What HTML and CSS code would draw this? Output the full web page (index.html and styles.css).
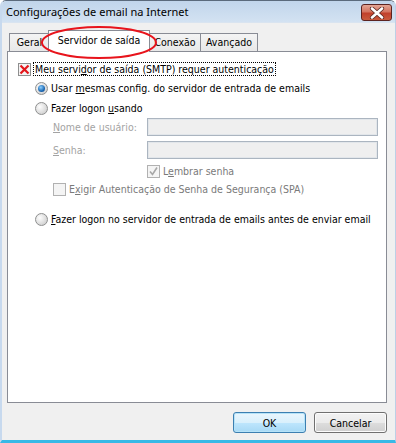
FILE: index.html
```html
<!DOCTYPE html>
<html lang="pt">
<head>
    <meta charset="UTF-8">
    <title>Configurações de email na Internet</title>
    <link rel="stylesheet" href="styles.css">
</head>
<body>
    <div class="window">
        <div class="titlebar">
            <span class="title">Configurações de email na Internet</span>
            <button class="close-btn" aria-label="Fechar">
                <svg width="16" height="12" viewBox="0 0 16 12">
                    <path d="M3 1.5 L13 10.5 M13 1.5 L3 10.5" stroke="#5b2a24" stroke-width="4.2" stroke-linecap="round"/>
                    <path d="M3 1.5 L13 10.5 M13 1.5 L3 10.5" stroke="#fff" stroke-width="2.6" stroke-linecap="round"/>
                </svg>
            </button>
        </div>
        <div class="client">
            <div class="tabs">
                <div class="tab tab-general">Geral</div>
                <div class="tab active">Servidor de saída</div>
                <div class="tab tab-conn">Conexão</div>
                <div class="tab tab-adv">Avançado</div>
            </div>
            <div class="panel">
                <div class="row row-auth">
                    <svg class="box" width="13" height="13" viewBox="0 0 13 13">
                        <rect x="0.5" y="0.5" width="12" height="12" fill="#f4f4f4" stroke="#8e8f8f"/>
                        <path d="M2.5 2.5 L10.5 10.5 M10.5 2.5 L2.5 10.5" stroke="#e3161b" stroke-width="2.2"/>
                    </svg>
                    <span class="focus">Meu servi<u>d</u>or de saída (SMTP) requer autenticação</span>
                </div>
                <div class="row row-same">
                    <span class="radio checked"></span>
                    <span>Usar <u>m</u>esmas config. do servidor de entrada de emails</span>
                </div>
                <div class="row row-logon">
                    <span class="radio"></span>
                    <span>Fazer logon <u>u</u>sando</span>
                </div>
                <div class="row row-user">
                    <span class="field-label disabled"><u>N</u>ome de usuário:</span>
                    <span class="field"></span>
                </div>
                <div class="row row-pass">
                    <span class="field-label disabled"><u>S</u>enha:</span>
                    <span class="field"></span>
                </div>
                <div class="row row-remember">
                    <svg class="box" width="13" height="13" viewBox="0 0 13 13">
                        <rect x="0.5" y="0.5" width="12" height="12" fill="#f4f4f4" stroke="#b1b1b1"/>
                        <path d="M3 6.5 L5.5 9.5 L10 2.5" fill="none" stroke="#a7a7a7" stroke-width="1.6"/>
                    </svg>
                    <span class="disabled-dark">L<u>e</u>mbrar senha</span>
                </div>
                <div class="row row-spa">
                    <svg class="box" width="13" height="13" viewBox="0 0 13 13">
                        <rect x="0.5" y="0.5" width="12" height="12" fill="#f4f4f4" stroke="#b1b1b1"/>
                    </svg>
                    <span class="disabled-dark">E<u>x</u>igir Autenticação de Senha de Segurança (SPA)</span>
                </div>
                <div class="row row-before">
                    <span class="radio"></span>
                    <span><u>F</u>azer logon no servidor de entrada de emails antes de enviar email</span>
                </div>
            </div>
            <div class="buttons">
                <button class="btn default">OK</button>
                <button class="btn">Cancelar</button>
            </div>
        </div>
        <svg class="mark" width="396" height="80" viewBox="0 0 396 80">
            <ellipse cx="99" cy="42.5" rx="57" ry="15.6" fill="none" stroke="#e8141c" stroke-width="2"/>
        </svg>
    </div>
</body>
</html>
```

FILE: styles.css
```css
* {
    box-sizing: border-box;
}
body {
    margin: 0;
    background: #fff;
    font-family: "DejaVu Sans Condensed", "DejaVu Sans", sans-serif;
    font-size: 10.5px;
    color: #000;
}
.window {
    position: relative;
    width: 396px;
    height: 443px;
    border-left: 2px solid #c7d9ee;
    border-right: 1px solid #bcd0e6;
    border-bottom: 3px solid #38b9e6;
    border-top: 1px solid #5b6a7c;
    border-radius: 6px 6px 0 0;
    background: #f0f0f0;
    display: flex;
    flex-direction: column;
    overflow: hidden;
    white-space: nowrap;
}
.titlebar {
    height: 22px;
    display: flex;
    align-items: center;
    justify-content: space-between;
    padding: 0 3px 0 4px;
    background: linear-gradient(#c1d5eb, #d3e2f2);
    border-bottom: 1px solid #d9e4f0;
}
.title {
    font-family: "Noto Sans", sans-serif;
    font-size: 11px;
    margin-top: -1px;
}
.close-btn {
    width: 31px;
    height: 17px;
    margin-top: 2px;
    padding: 0;
    border: 1px solid #5c2320;
    border-radius: 3px;
    background: linear-gradient(#e3a594, #d47460 45%, #c1402b 55%, #c95a3d);
    display: flex;
    align-items: center;
    justify-content: center;
}
.client {
    flex: 1;
    display: flex;
    flex-direction: column;
    padding: 7px 8px 0 5px;
}
.tabs {
    display: flex;
    align-items: flex-end;
    height: 21px;
    padding-left: 2px;
    position: relative;
    z-index: 1;
}
.tab {
    height: 18px;
    border: 1px solid #898c95;
    border-bottom: none;
    margin-left: -1px;
    background: linear-gradient(#f4f4f4, #e8e8e8);
    line-height: 16px;
    text-align: center;
}
.tab-general {
    margin-left: 0;
    width: 41px;
}
.tab.active {
    width: 102px;
    height: 22px;
    margin: 0 0 -1px -2px;
    background: #fff;
    position: relative;
    z-index: 2;
    line-height: 18px;
}
.tab-conn {
    width: 52px;
}
.tab-adv {
    width: 58px;
}
.panel {
    height: 352px;
    background: #fff;
    border: 1px solid #898c95;
    padding: 0 8px 0 10px;
    display: flex;
    flex-direction: column;
}
.row {
    display: flex;
    align-items: center;
    height: 16px;
}
.row-auth {
    margin-top: 9px;
}
.row-auth .box {
    margin-right: 2px;
}
.focus {
    border: 1px dotted #000;
    padding: 0 1px;
    line-height: 12px;
}
.row-same {
    margin-top: 3px;
    padding-left: 17px;
}
.row-logon {
    margin-top: 4px;
    padding-left: 17px;
}
.radio {
    width: 13px;
    height: 13px;
    border-radius: 50%;
    border: 1px solid #8e8f8f;
    background: radial-gradient(circle at 35% 35%, #fdfdfd, #d6d6d6 70%, #c2c2c2);
    margin-right: 3px;
    display: flex;
    align-items: center;
    justify-content: center;
    flex-shrink: 0;
}
.radio.checked::after {
    content: "";
    width: 7px;
    height: 7px;
    border-radius: 50%;
    background: radial-gradient(circle at 40% 35%, #8ed0ff, #1c69b4 60%, #0d3f7e);
}
.row-user,
.row-pass {
    height: 18px;
    padding-left: 35px;
}
.row-user {
    margin-top: 2px;
}
.row-pass {
    margin-top: 5px;
}
.field-label {
    width: 94px;
}
.disabled {
    color: #a3a3a3;
}
.disabled-dark {
    color: #7a7a7a;
}
.field {
    flex: 1;
    height: 18px;
    border: 1px solid #abb5c0;
    background: #efefef;
    box-shadow: inset 0 0 0 1px #e2e6ea;
}
.row-remember {
    margin-top: 4px;
    padding-left: 129px;
}
.row-spa {
    margin-top: 2px;
    padding-left: 35px;
}
.row-remember .box,
.row-spa .box {
    margin-right: 3px;
}
.row-before {
    margin-top: 14px;
    padding-left: 17px;
}
.buttons {
    display: flex;
    justify-content: flex-end;
    gap: 8px;
    margin-top: 9px;
}
.btn {
    width: 73px;
    height: 21px;
    font-family: "DejaVu Sans Condensed", "DejaVu Sans", sans-serif;
    font-size: 10.5px;
    color: #000;
    border: 1px solid #707070;
    border-radius: 3px;
    background: linear-gradient(#f2f2f2, #ebebeb 50%, #dddddd 51%, #cfcfcf);
    box-shadow: inset 0 0 0 1px #fcfcfc;
    padding: 0;
}
.btn.default {
    border-color: #3c7fb1;
    background: linear-gradient(#eaf6fd, #d9f0fc 50%, #bee6fd 51%, #a7d9f5);
    box-shadow: inset 0 0 0 1px #b6e3f8;
}
.mark {
    position: absolute;
    left: -2px;
    top: -1px;
    z-index: 5;
    pointer-events: none;
}
```
